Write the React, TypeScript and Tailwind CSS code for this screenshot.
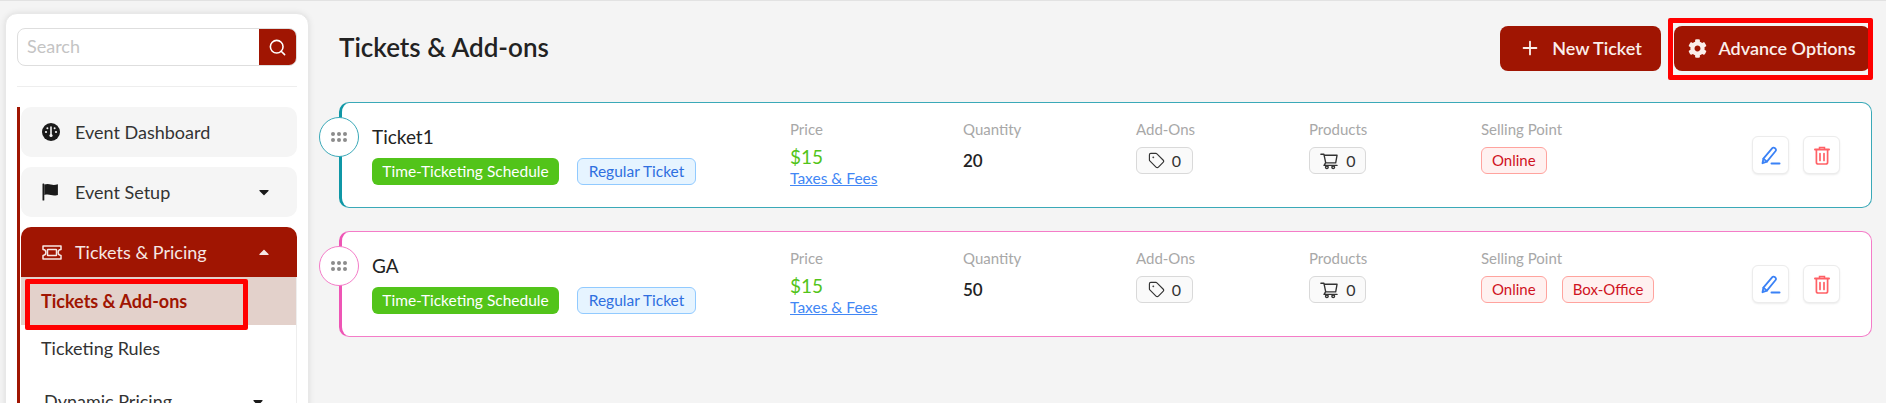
import { Search, Plus, Tag } from "lucide-react";
import { FaCog, FaCaretDown, FaCaretUp } from "react-icons/fa";
import { AiOutlineShoppingCart } from "react-icons/ai";
import type { ReactNode } from "react";

function TicketIcon() {
  return (
    <svg width="20" height="15" viewBox="0 0 20 15" fill="none" stroke="currentColor" strokeWidth="1.5">
      <path d="M1 1h18v3.6a2.9 2.9 0 0 0 0 5.8V14H1v-3.6a2.9 2.9 0 0 0 0-5.8z" strokeLinejoin="round" />
      <rect x="5.5" y="4.5" width="9" height="6" rx="0.5" />
    </svg>
  );
}

function GaugeIcon() {
  return (
    <svg width="18" height="18" viewBox="0 0 18 18">
      <circle cx="9" cy="9" r="9" fill="#1a1a1a" />
      <path d="M9 4v8" stroke="#f5f5f5" strokeWidth="1.6" strokeLinecap="round" />
      <circle cx="9" cy="12.5" r="1.6" fill="#f5f5f5" />
      <circle cx="4" cy="9" r="1.1" fill="#f5f5f5" />
      <circle cx="14" cy="9" r="1.1" fill="#f5f5f5" />
      <circle cx="5.4" cy="5.2" r="1" fill="#f5f5f5" />
      <circle cx="12.6" cy="5.2" r="1" fill="#f5f5f5" />
    </svg>
  );
}

function FlagIcon() {
  return (
    <svg width="17" height="18" viewBox="0 0 17 18" fill="#1a1a1a">
      <rect x="0.5" y="0.5" width="1.8" height="17" rx="0.6" />
      <path d="M2.3 1.5c2.5-.8 4.6-.6 6.6 0s4 .6 7-.2V12c-3 .8-5 .7-7 .1s-4.1-.8-6.6 0z" />
    </svg>
  );
}

function PenIcon() {
  return (
    <svg width="20" height="19" viewBox="0 0 20 19" fill="none" stroke="#3b82f6" strokeWidth="1.8" strokeLinejoin="round" strokeLinecap="round">
      <path d="M1.5 17.2l.9-4.6L11.3 2.2a1.7 1.7 0 0 1 2.4-.2l.7.6a1.7 1.7 0 0 1 .2 2.4L5.9 15.6z" />
      <path d="M2.4 12.6l3.5 3" />
      <path d="M10.5 17.4h8" strokeWidth="2" />
    </svg>
  );
}

function TrashIcon() {
  return (
    <svg width="16" height="19" viewBox="0 0 16 19" fill="none" stroke="#ff6166" strokeWidth="1.7" strokeLinecap="round">
      <path d="M1 3.6h14" strokeWidth="2" />
      <path d="M5.5 3V1.4h5V3" strokeWidth="1.5" />
      <path d="M2.4 4v12.2c0 1 .8 1.8 1.8 1.8h7.6c1 0 1.8-.8 1.8-1.8V4" />
      <path d="M6 7.5v7M10 7.5v7" />
    </svg>
  );
}

function DragDots() {
  return (
    <svg width="16" height="12" viewBox="0 0 16 12" fill="#8c8c8c">
      {[2, 8, 14].map((x) =>
        [3, 9].map((y) => <circle key={`${x}-${y}`} cx={x} cy={y} r="2" />)
      )}
    </svg>
  );
}

function Label({ children }: { children: ReactNode }) {
  return <div className="text-[15px] leading-[20px] text-[#a8a8a8]">{children}</div>;
}

function CountChip({ icon, count }: { icon: ReactNode; count: number }) {
  return (
    <div className="flex h-[27px] w-[57px] items-center justify-center gap-[7px] rounded-[6px] border border-[#d9d9d9] bg-[#fafafa] text-[16px] text-[#333]">
      {icon}
      {count}
    </div>
  );
}

function Pill({ children }: { children: ReactNode }) {
  return (
    <span className="flex h-[27px] items-center rounded-[6px] border border-[#ffa39e] bg-[#fff1f0] px-[10px] text-[15px] text-[#cf1322]">
      {children}
    </span>
  );
}

function TicketCard({
  name,
  quantity,
  points,
  border,
  strong,
}: {
  name: string;
  quantity: number;
  points: string[];
  border: string;
  strong: string;
}) {
  return (
    <div className={`relative flex h-[106px] rounded-[10px] border border-l-[3px] bg-white ${border}`}>
      <div className={`absolute left-[-23px] top-[14px] flex h-[40px] w-[40px] items-center justify-center rounded-full border bg-white ${strong}`}>
        <DragDots />
      </div>
      <div className="w-[448px] pl-[30px] pt-[21px]">
        <div className="text-[19px] leading-[26px] text-[#222]">{name}</div>
        <div className="mt-[8px] flex gap-[18px]">
          <span className="flex h-[27px] w-[187px] items-center justify-center rounded-[6px] bg-[#52c41a] text-[15.5px] text-white">
            Time-Ticketing Schedule
          </span>
          <span className="flex h-[27px] w-[119px] items-center justify-center rounded-[6px] border border-[#91caff] bg-[#e6f4ff] text-[15.5px] text-[#2f6fe0]">
            Regular Ticket
          </span>
        </div>
      </div>
      <div className="grid flex-1 grid-cols-[173px_173px_173px_172px_1fr] pt-[16px]">
        <div>
          <Label>Price</Label>
          <div className="mt-[6px] text-[19px] leading-[24px] text-[#52c41a]">$15</div>
          <a className="block text-[15.5px] leading-[19px] text-[#4287f5] underline">Taxes &amp; Fees</a>
        </div>
        <div>
          <Label>Quantity</Label>
          <div className="mt-[10px] text-[17px] font-semibold leading-[24px] text-[#222]">{quantity}</div>
        </div>
        <div>
          <Label>Add-Ons</Label>
          <div className="mt-[8px]">
            <CountChip icon={<Tag size={17} strokeWidth={1.6} />} count={0} />
          </div>
        </div>
        <div>
          <Label>Products</Label>
          <div className="mt-[8px]">
            <CountChip icon={<AiOutlineShoppingCart size={20} />} count={0} />
          </div>
        </div>
        <div>
          <Label>Selling Point</Label>
          <div className="mt-[8px] flex gap-[15px]">
            {points.map((p) => (
              <Pill key={p}>{p}</Pill>
            ))}
          </div>
        </div>
      </div>
      <div className="absolute right-[31px] top-[33px] flex gap-[14px]">
        <button className="flex h-[38px] w-[37px] items-center justify-center rounded-[6px] border border-[#ececec] bg-white shadow-[0_1px_2px_rgba(0,0,0,0.08)]">
          <PenIcon />
        </button>
        <button className="flex h-[38px] w-[37px] items-center justify-center rounded-[6px] border border-[#ececec] bg-white shadow-[0_1px_2px_rgba(0,0,0,0.08)]">
          <TrashIcon />
        </button>
      </div>
    </div>
  );
}

function MenuItem({ icon, label, caret }: { icon: ReactNode; label: string; caret?: boolean }) {
  return (
    <div className="mb-[10px] flex h-[50px] items-center rounded-[10px] bg-[#f5f5f5] pl-[21px] pr-[25px] text-[18px] text-[#333]">
      <span className="flex w-[33px] items-center text-[#1a1a1a]">{icon}</span>
      <span className="flex-1">{label}</span>
      {caret && <FaCaretDown size={16} className="text-[#1a1a1a]" />}
    </div>
  );
}

export default function App() {
  return (
    <div className="flex h-[403px] w-[1886px] overflow-hidden border-t border-[#e2e2e2] bg-[#f4f4f4] [font-family:Lato,sans-serif]">
      <aside className="ml-[5px] mt-[12px] h-[420px] w-[304px] shrink-0 rounded-[12px] border border-[#e8e8e8] bg-white px-[11px] pt-[14px] shadow-[0_0_6px_rgba(0,0,0,0.1)]">
        <div className="flex h-[38px] overflow-hidden rounded-[8px] border border-[#dedede]">
          <div className="flex flex-1 items-center pb-[2px] pl-[9px] text-[18px] text-[#c4c4c4]">Search</div>
          <div className="flex w-[37px] items-center justify-center bg-[#a01502] text-white">
            <Search size={19} strokeWidth={2} />
          </div>
        </div>
        <div className="mt-[20px] border-t border-[#eeeeee]" />
        <div className="mt-[20px] border-l-[3px] border-[#a01502] pl-[1px]">
          <MenuItem icon={<GaugeIcon />} label="Event Dashboard" />
          <MenuItem icon={<FlagIcon />} label="Event Setup" caret />
          <div className="flex h-[50px] items-center rounded-t-[10px] bg-[#a01502] pl-[21px] pr-[25px] text-[18px] text-[#f6e7e4]">
            <span className="flex w-[33px] items-center">
              <TicketIcon />
            </span>
            <span className="flex-1">Tickets &amp; Pricing</span>
            <FaCaretUp size={16} />
          </div>
          <div className="border-r border-[#eeeeee]">
            <div className="flex h-[48px] items-center bg-[#e3d1cb] pl-[20px] text-[18px] font-bold text-[#a01502]">
              Tickets &amp; Add-ons
            </div>
            <div className="flex h-[47px] items-center pl-[20px] text-[18px] text-[#333]">Ticketing Rules</div>
            <div className="flex h-[47px] items-center pl-[23px] pr-[30px] pt-[12px] text-[18px] text-[#333]">
              <span className="flex-1">Dynamic Pricing</span>
              <FaCaretDown size={16} className="text-[#1a1a1a]" />
            </div>
          </div>
        </div>
      </aside>

      <main className="min-w-0 flex-1 pl-[28px] pr-[14px]">
        <div className="mt-[24px] flex h-[46px] items-center justify-between">
          <h1 className="pb-[2px] pl-[2px] text-[26px] font-semibold text-[#222]">Tickets &amp; Add-ons</h1>
          <div className="flex gap-[13px] pr-[2px]">
            <button className="flex h-[45px] w-[161px] items-center justify-center gap-[11px] rounded-[8px] bg-[#a01502] text-[18px] font-semibold text-[#fbeeea]">
              <Plus size={22} strokeWidth={2} />
              New Ticket
            </button>
            <button className="flex h-[45px] w-[196px] items-center justify-center gap-[11px] rounded-[8px] bg-[#a01502] text-[18px] font-semibold text-[#fbeeea]">
              <FaCog size={19} />
              Advance Options
            </button>
          </div>
        </div>
        <div className="ml-[2px] mt-[31px] flex flex-col gap-[23px]">
          <TicketCard name="Ticket1" quantity={20} points={["Online"]} border="border-[#3aa9b8] border-l-[#0f97a6]" strong="border-[#3aa9b8]" />
          <TicketCard name="GA" quantity={50} points={["Online", "Box-Office"]} border="border-[#f47cc8] border-l-[#ee55b5]" strong="border-[#f47cc8]" />
        </div>
      </main>

      <div className="pointer-events-none absolute left-[25px] top-[279px] h-[51px] w-[223px] rounded-[2px] border-[5px] border-[#ff0000]" />
      <div className="pointer-events-none absolute left-[1668px] top-[18px] h-[62px] w-[205px] rounded-[2px] border-[5px] border-[#ff0000]" />
    </div>
  );
}
